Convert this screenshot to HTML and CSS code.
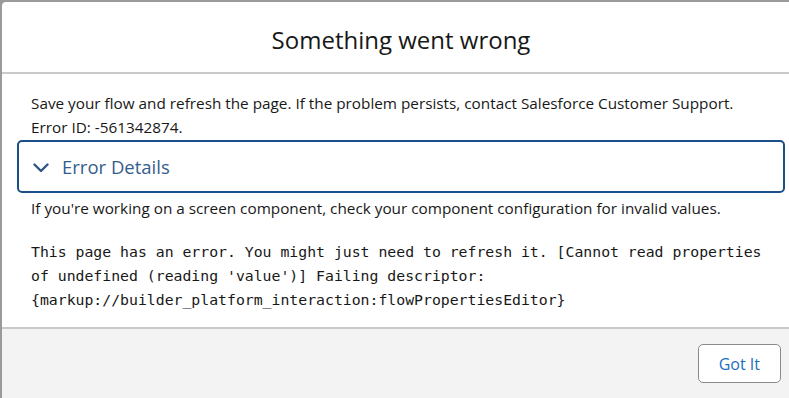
FILE: index.html
```html
<!DOCTYPE html>
<html lang="en">

<head>
	<meta charset="UTF-8" />
	<title>Something went wrong</title>
	<link rel="stylesheet" href="styles.css">
</head>

<body>
	<!-- error modal -->
	<div class="modal">
		<div class="modal-header">
			<h2 class="modal-title">Something went wrong</h2>
		</div>

		<div class="modal-body">
			<p class="message">Save your flow and refresh the page. If the problem persists, contact Salesforce Customer Support.<br>Error ID: -561342874.</p>

			<button class="details-toggle" type="button">
				<svg class="chevron" width="16" height="10" viewBox="0 0 16 10">
					<path d="M1.5 1.5 L8 8 L14.5 1.5" />
				</svg>
				<span>Error Details</span>
			</button>

			<p class="hint">If you're working on a screen component, check your component configuration for invalid values.</p>

			<pre class="trace">This page has an error. You might just need to refresh it. [Cannot read properties
of undefined (reading 'value')] Failing descriptor:
{markup://builder_platform_interaction:flowPropertiesEditor}</pre>
		</div>

		<div class="modal-footer">
			<button class="button" type="button">Got It</button>
		</div>
	</div>
</body>

</html>
```

FILE: styles.css
```css
html,
body {
	margin: 0;
	height: 100%;
	overflow: hidden;
}

body {
	background-color: #9a9a9a;
	font-family: "Open Sans", "Noto Sans", sans-serif;
	color: #181818;
}

.modal {
	width: 798px;
	margin: 2px 0 0 2px;
	background-color: white;
	border-top-left-radius: 4px;
	overflow: hidden;
	height: calc(100% - 2px);
	display: flex;
	flex-direction: column;
}

.modal-header {
	height: 70px;
	display: flex;
	align-items: center;
	justify-content: center;
	border-bottom: 2px solid #c9c9c9;
}

.modal-title {
	margin: 0;
	font-size: 24px;
	font-weight: normal;
	padding-top: 5px;
}

.modal-body {
	padding: 17px 15px 15px 15px;
	border-bottom: 2px solid #c9c9c9;
}

.message,
.hint {
	margin: 0;
	padding-left: 14px;
	font-size: 15.3px;
	line-height: 24px;
}

.details-toggle {
	display: flex;
	align-items: center;
	width: 100%;
	height: 53px;
	margin-top: 1px;
	padding: 0 0 0 14px;
	background: white;
	border: 2px solid #1b4f8a;
	border-radius: 5px;
	font-family: inherit;
	font-size: 18.5px;
	color: #355d8c;
	cursor: pointer;
	text-align: left;
}

.chevron {
	margin-right: 13px;
	margin-top: 2px;
}

.chevron path {
	fill: none;
	stroke: #2f5583;
	stroke-width: 2.4;
	stroke-linecap: round;
	stroke-linejoin: round;
}

.hint {
	margin-top: 3px;
}

.trace {
	margin: 20px 0 0 0;
	padding-left: 14px;
	font-family: "DejaVu Sans Mono", "Liberation Mono", monospace;
	font-size: 14.8px;
	line-height: 24px;
	color: #181818;
}

.modal-footer {
	flex: 1;
	background-color: #f3f3f3;
	display: flex;
	justify-content: flex-end;
	align-items: flex-start;
	padding: 15px 19px 0 0;
}

.button {
	height: 39px;
	padding: 0 20px;
	background-color: white;
	border: 1px solid #8a8a8a;
	border-radius: 5px;
	font-family: inherit;
	font-size: 16px;
	color: #1b6fc0;
	cursor: pointer;
}
```
